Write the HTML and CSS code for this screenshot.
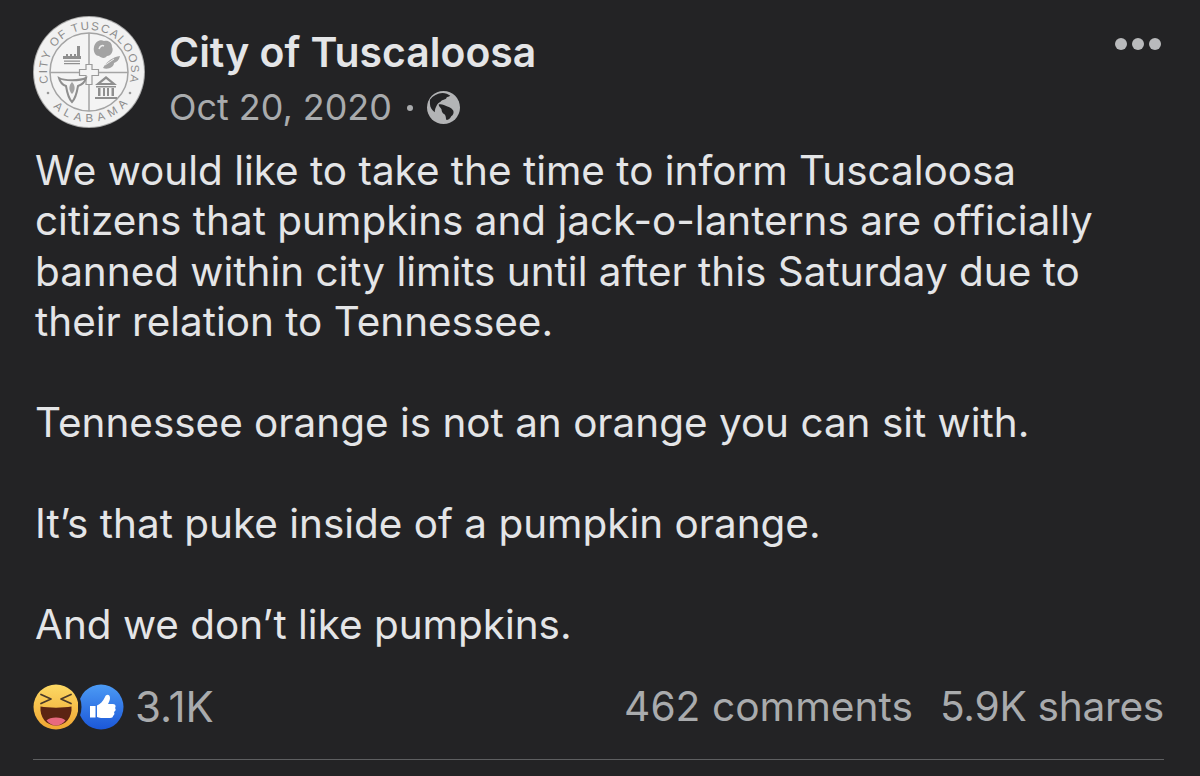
FILE: index.html
```html
<!DOCTYPE html>
<html lang="en">
<head>
<meta charset="utf-8">
<title>City of Tuscaloosa</title>
<link rel="stylesheet" href="styles.css">
</head>
<body>
<main class="post">
  <header class="head">
    <svg class="seal" viewBox="0 0 112 112" aria-hidden="true">
      <circle cx="56" cy="56" r="56" fill="#a9a9a9"/>
      <circle cx="56" cy="56" r="55" fill="#f1f1f1"/>
      <circle cx="56" cy="56" r="39" fill="#f4f4f4" stroke="#a4a4a4" stroke-width="1.5"/>
      <defs>
        <path id="top" d="M 15.500 66.900 A 42 42 0 1 1 96.500 66.900"/>
        <path id="bot" d="M 15 84.700 A 50 50 0 0 0 97 84.700"/>
      </defs>
      <text class="sealtext"><textPath href="#top" textLength="153" lengthAdjust="spacing">CITY OF TUSCALOOSA</textPath></text>
      <text class="sealtext"><textPath href="#bot" textLength="84" lengthAdjust="spacing" startOffset="8">ALABAMA</textPath></text>
      <circle cx="15" cy="77" r="1.300" fill="#999"/>
      <circle cx="97" cy="77" r="1.300" fill="#999"/>
      <path d="M56 17V95M17 56.500H95" stroke="#a4a4a4" stroke-width="1.500"/>
      <path d="M53 48.500h6v5h6.500v6H59v9h-6v-9h-6.500v-6H53z" fill="#f4f4f4" stroke="#9a9a9a" stroke-width="1.200"/>
      <path d="M44 30h3v10h-3zM30 40h18v3H30zM31 44.500h16v1.300H31zM31 47h16v1.300H31z" fill="#8f8f8f"/>
      <path d="M31 40h2v-2h2v2h2v-2h2v2h2v-2h2v2h2v1H31z" fill="#8f8f8f"/>
      <path d="M61 31c1-5 6-8 10-6 4-1 8 1 8 6 2 4-1 9-5 9-2 3-6 2-8 0-4 0-6-5-5-9z" fill="#a3a3a3"/>
      <path d="M66 33c1-3 3-4 5-3" fill="none" stroke="#efefef" stroke-width="1.500"/>
      <path d="M70 52c4-7 10-11 17-12-1 4-3 6-6 7 0 4-6 7-11 5z" fill="#a3a3a3"/>
      <path d="M72 49l9-6" stroke="#efefef" stroke-width="1"/>
      <path d="M26 62c5 3 21 3 27 0-1 4-5 7-8 8-1 6-3 13-6 16-3-3-5-10-6-16-3-1-6-4-7-8z" fill="none" stroke="#8f8f8f" stroke-width="2"/>
      <path d="M39 66c3 3 4 8 0 12-4-4-3-9 0-12z" fill="#a3a3a3"/>
      <path d="M73 60l11 9H62zM73 63l-5 4h10z" fill="#8f8f8f" fill-rule="evenodd"/>
      <path d="M63 70h20v1.500H63zM65 72h2.500v8H65zM70 72h2v8h-2zM74 72h2v8h-2zM78.500 72H81v8h-2.500zM62 81h22v2H62z" fill="#8f8f8f"/>
    </svg>
    <div class="meta">
      <h1 class="name">City of Tuscaloosa</h1>
      <div class="date">
        <span>Oct 20, 2020</span>
        <span class="dot"></span>
        <svg class="globe" viewBox="0 0 34 34" aria-hidden="true">
          <circle cx="17" cy="17" r="17" fill="#b3b4b6"/>
          <path d="M3 9c3-4 8-7 13-7 3 0 6 1 8 3-1 1-3 1-4 2 0 2-5 2-6 4-2 1-3 2-4 4-1 2-2 4-2 7-3-2-5-5-5-9 0-2 0-3 0-4zM12 14c3-1 6 1 9 2 2 1 4 1 6 4 1 2 0 5-2 6-1 2-3 4-5 4-1-2 0-4-2-6-2-1-3-3-3-5-1-2-3-3-3-5z" fill="#232325"/>
        </svg>
      </div>
    </div>
    <div class="more" aria-label="More"><i></i><i></i><i></i></div>
  </header>
  <div class="body">
    <p>We would like to take the time to inform Tuscaloosa citizens that pumpkins and jack-o-lanterns are officially banned within city limits until after this Saturday due to their relation to Tennessee.</p>
    <p>Tennessee orange is not an orange you can sit with.</p>
    <p>It’s that puke inside of a pumpkin orange.</p>
    <p>And we don’t like pumpkins.</p>
  </div>
  <footer class="stats">
    <div class="reacts">
      <svg class="haha" viewBox="0 0 46 46" aria-hidden="true">
        <defs>
          <linearGradient id="hg" x1="0" y1="0" x2="0" y2="1"><stop offset="0" stop-color="#fcd964"/><stop offset="1" stop-color="#f0a632"/></linearGradient>
        </defs>
        <circle cx="23" cy="23" r="22.500" fill="url(#hg)"/>
        <path d="M8 10.500l10 4.500-10 4.500M38 10.500l-10 4.500 10 4.500" fill="none" stroke="#4a3a2a" stroke-width="1.800" stroke-linecap="round" stroke-linejoin="round"/>
        <path d="M7.500 22.500c8 1.500 23 1.500 31 0 1 11-6 19-15.500 19S6.500 33.500 7.500 22.500z" fill="#5b2413"/>
        <path d="M13.500 36.500c3-4 16-4 19 0-3 3.500-6 5-9.500 5s-6.500-1.500-9.500-5z" fill="#e8697e"/>
      </svg>
      <svg class="like" viewBox="0 0 46 46" aria-hidden="true">
        <defs>
          <linearGradient id="lg" x1="0" y1="0" x2="0" y2="1"><stop offset="0" stop-color="#4c9bf5"/><stop offset="1" stop-color="#1b57d8"/></linearGradient>
        </defs>
        <circle cx="23" cy="23" r="22.500" fill="url(#lg)"/>
        <circle cx="-22.500" cy="23" r="26" fill="#232325"/>
        <path d="M12 22h5.500v11.500H12zM19 21.500c3-1.500 6-4 8-8.500 1-3 5-3 5 1 0 2-1 4-2 6h5c3 0 3 3 2 4 1 1 1 3-1 4 1 2 0 3-1 4 0 1-1 2-3 2h-9c-2 0-3-1-4-1z" fill="#fff"/>
      </svg>
      <span class="count">3.1K</span>
    </div>
    <div class="counts">
      <span>462 comments</span>
      <span class="shares">5.9K shares</span>
    </div>
  </footer>
  <hr class="rule">
</main>
</body>
</html>
```
FILE: styles.css
```css
html, body {
  margin: 0;
  padding: 0;
  background: #232325;
}
body {
  width: 1200px;
  height: 776px;
  overflow: hidden;
  font-family: Inter, "Liberation Sans", sans-serif;
  color: #e4e5e7;
}
.post {
  display: flex;
  flex-direction: column;
  padding: 16px 36px 0 33px;
}
.head {
  display: flex;
  align-items: flex-start;
}
.seal {
  width: 112px;
  height: 112px;
  flex: none;
}
.sealtext {
  font-family: "Liberation Sans", sans-serif;
  font-size: 11.5px;
  fill: #8c8c8c;
}
.meta {
  flex: 1;
  margin-left: 24px;
  display: flex;
  flex-direction: column;
}
.name {
  margin: 13px 0 0;
  font-size: 40.9px;
  line-height: 46px;
  font-weight: 600;
  color: #e4e5e7;
}
.date {
  display: flex;
  align-items: center;
  margin-top: 11px;
  font-size: 35.9px;
  line-height: 42px;
  color: #a9abad;
}
.dot {
  width: 6px;
  height: 6px;
  border-radius: 50%;
  background: #a9abad;
  margin: 2px 14px 0 15px;
}
.globe {
  width: 33px;
  height: 33px;
  flex: none;
}
.more {
  display: flex;
  gap: 5px;
  margin: 22px 3px 0 0;
}
.more i {
  display: block;
  width: 12px;
  height: 12px;
  border-radius: 50%;
  background: #b9babc;
}
.body {
  max-width: 1090px;
  margin: 18px 0 0 2px;
  font-size: 40.45px;
  line-height: 50.45px;
  color: #e4e5e7;
}
.body p {
  margin: 0 0 50.45px;
}
.body p:last-child {
  margin-bottom: 0;
}
.stats {
  display: flex;
  justify-content: space-between;
  align-items: center;
  margin-top: 34px;
  color: #a9abad;
  font-size: 40.7px;
  line-height: 46px;
}
.reacts {
  display: flex;
  align-items: center;
}
.haha {
  width: 46px;
  height: 46px;
  flex: none;
}
.like {
  width: 46px;
  height: 46px;
  flex: none;
  margin-left: -1px;
}
.count {
  margin-left: 11px;
  font-size: 42px;
}
.counts {
  display: flex;
  gap: 27px;
}
.shares {
  letter-spacing: -0.3px;
}
.rule {
  width: 100%;
  height: 1px;
  margin: 29px 0 0;
  border: 0;
  background: #5e5f61;
}
```
